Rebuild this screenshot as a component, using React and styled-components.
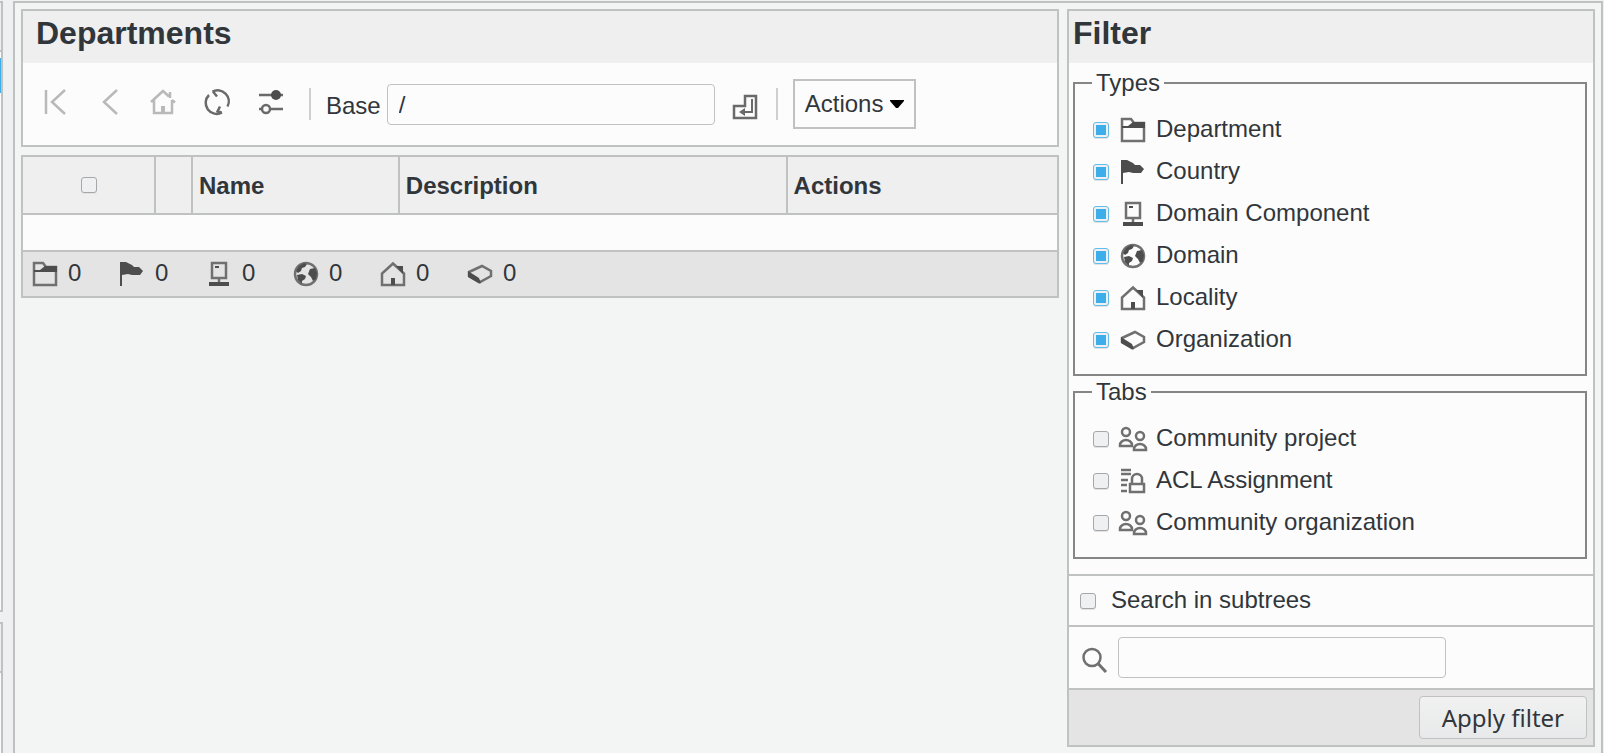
import React from "react";
import styled, { createGlobalStyle, css } from "styled-components";

const line = "#c0c1c1";
const surface = "#fcfcfc";
const ink = "#31363b";
const blue = "#3daee9";

const GlobalStyle = createGlobalStyle`
  *, *::before, *::after { box-sizing: border-box; }
  body {
    margin: 0;
    background: #eff0f1;
    color: ${ink};
    font: 24px/28px "Liberation Sans", Arial, sans-serif;
  }
  button, input { font: inherit; color: inherit; }
`;

const Page = styled.div`
  display: flex;
  gap: 10px;
  min-height: 100vh;
  padding: 1px 1px 0 0;
`;

const SideStrip = styled.aside`
  display: flex;
  flex-direction: column;
  gap: 10px;
  width: 3px;
  flex: none;
`;

const SidePanel = styled.div`
  border: 2px solid ${line};
  border-left: 0;
  background: ${surface};
  ${(p) => (p.$grow ? css`flex: 1; border-bottom: 0;` : css`height: 611px;`)}
`;

const SideHeading = styled.div`
  height: 49px;
  border-bottom: 2px solid ${line};
  background: #efefef;
`;

const SideActive = styled.div`
  height: 35px;
  margin-top: 6px;
  background: ${blue};
`;

const Frame = styled.main`
  flex: 1;
  min-width: 0;
  display: grid;
  grid-template-columns: minmax(0, 173fr) minmax(0, 88fr);
  gap: 8px;
  align-items: start;
  padding: 6px;
  border: 2px solid ${line};
  border-bottom: 0;
  background: #f3f5f4;
`;

const Column = styled.div`
  display: flex;
  flex-direction: column;
  gap: 8px;
`;

const Panel = styled.section`
  border: 2px solid ${line};
  background: ${surface};
`;

const PanelTitle = styled.h2`
  margin: 0;
  padding: 4px ${(p) => (p.$wide ? 13 : 4)}px 12px;
  background: #efefef;
  font-size: 32px;
  line-height: 36px;
`;

const Toolbar = styled.div`
  display: flex;
  align-items: center;
  min-height: 82px;
  padding-left: 20px;
`;

const IconGroup = styled.div`
  display: flex;
  gap: 30px;
  padding-bottom: 4px;
`;

const IconButton = styled.button`
  display: flex;
  padding: 0;
  border: 0;
  background: none;
  color: #6a6a6a;
  &:disabled { color: #b9b9b9; }
`;

const SubmitIcon = styled(IconButton)`
  margin-left: 18px;
  padding-top: 6px;
`;

const Separator = styled.span`
  width: 2px;
  height: 32px;
  margin: 0 ${(p) => p.$after}px 0 ${(p) => p.$before}px;
  background: #cfcfcf;
`;

const FieldLabel = styled.label`
  padding: 4px 6px 0 0;
`;

const TextInput = styled.input`
  width: 328px;
  height: 41px;
  padding: 2px 11px 0;
  border: 1px solid ${line};
  border-radius: 4px;
  background: ${surface};
  outline: 0;
`;

const MenuButton = styled.button`
  display: flex;
  align-items: center;
  gap: 7px;
  height: 50px;
  padding: 0 10px;
  border: 2px solid ${line};
  background: ${surface};
`;

const ListTable = styled.table`
  width: 100%;
  table-layout: fixed;
  border: 2px solid ${line};
  border-spacing: 0;
  background: ${surface};
`;

const HeadCell = styled.th`
  width: ${(p) => p.$width};
  height: 58px;
  padding: ${(p) => (p.$center ? 0 : 2)}px 6px 0;
  border-bottom: 2px solid ${line};
  border-right: ${(p) => (p.$last ? 0 : 2)}px solid ${line};
  background: #efefef;
  text-align: ${(p) => (p.$center ? "center" : "left")};
`;

const EmptyCell = styled.td`
  height: 35px;
  padding: 0;
`;

const SummaryCell = styled.td`
  height: 46px;
  padding: 0 10px;
  border-top: 2px solid ${line};
  background: #e4e4e4;
`;

const Summary = styled.div`
  display: flex;
`;

const Count = styled.span`
  display: flex;
  align-items: center;
  gap: 11px;
  width: 87px;
`;

const Caption = styled.span`
  padding-bottom: 2px;
`;

const Tick = styled.input.attrs({ type: "checkbox" })`
  appearance: none;
  display: block;
  flex: none;
  width: 16px;
  height: 16px;
  margin: ${(p) => (p.$center ? "0 auto" : "0")};
  border: 1px solid #a5a8ab;
  border-radius: 3px;
  background: #eff0f1;
  box-shadow: 0 1px 0 #e2e2e2;
  &:checked {
    border-color: #62bdec;
    background: linear-gradient(${blue}, ${blue}) center / 10px 10px no-repeat #eff0f1;
  }
`;

const Groups = styled.div`
  padding: 6px 6px 15px 4px;
`;

const Group = styled.fieldset`
  margin: 0;
  padding: 12px 18px 13px 17px;
  border: 2px solid #868686;
  & + & { margin-top: 2px; }
`;

const GroupName = styled.legend`
  padding: 0 4px;
`;

const Option = styled.label`
  display: flex;
  align-items: center;
  height: 42px;
  padding-left: 1px;
`;

const OptionIcon = styled.span`
  display: flex;
  margin: 0 11px 0 12px;
`;

const SubtreeRow = styled.label`
  display: flex;
  align-items: center;
  gap: 15px;
  height: 51px;
  padding-left: 11px;
  border-top: 2px solid ${line};
`;

const SearchRow = styled.div`
  display: flex;
  align-items: center;
  gap: 12px;
  height: 63px;
  padding-left: 13px;
  border-top: 2px solid ${line};
`;

const SearchLabel = styled.label`
  display: flex;
  padding-top: 4px;
`;

const PanelFooter = styled.div`
  display: flex;
  justify-content: flex-end;
  padding: 6px;
  border-top: 2px solid ${line};
  background: #e4e4e4;
`;

const ApplyButton = styled.button`
  height: 43px;
  padding: 0 22px;
  border: 1px solid ${line};
  border-radius: 4px;
  background: linear-gradient(#f1f1f1, #e8e9ea);
  font-family: "Noto Sans", sans-serif;
`;

const Drawing = styled.svg`
  display: block;
  width: 24px;
  height: 24px;
  overflow: visible;
  fill: none;
  stroke-width: 2.5;
  color: ${(p) => (p.$inherit ? "inherit" : "#707070")};
  stroke: currentColor;
  .solid { fill: #4d4d4d; stroke: none; }
  .tone { fill: currentColor; stroke: none; }
`;

const shapes = {
  first: <path d="M3 0v24M22 0L9 12L22 24" />,
  back: <path d="M20 0L7 12L20 24" />,
  root: (
    <>
      <path d="M0 12L12 1L18 6.500M3 10v13h18V10M21 10l3 2.500" />
      <path d="M19 2v6" />
      <path className="tone" d="M10 16h4v7h-4z" />
    </>
  ),
  refresh: (
    <>
      <path d="M4 5A11 11 0 0 0 17 22.500M7.500 1.700A11 11 0 0 1 22.500 16.500" />
      <path d="M8 1.500L12 6.500M16.500 22.500L12.500 21.500L15 16.500" />
    </>
  ),
  sliders: (
    <>
      <path d="M0 5h24M0 19h3M11 19h13" />
      <circle className="solid" cx="17" cy="5" r="5" />
      <circle cx="7" cy="19" r="4" />
    </>
  ),
  enter: (
    <>
      <path d="M12 1h11v22H1V11h11z" />
      <path d="M19 4v13h-9" strokeWidth="2" />
      <path className="tone" d="M6 17l6-4v8z" />
    </>
  ),
  folder: (
    <>
      <path d="M1 1h9l3 4h10v18H1z" />
      <path className="solid" d="M1 8h6l5-4h12v6H1z" />
    </>
  ),
  flag: <path className="solid" d="M0 0h6l6 3l2 2h5l4 4l-3 4h-8l-4-1l-6 1v11H0z" />,
  computer: (
    <>
      <path d="M5 1h14v15H5zM12 17v4" />
      <path className="solid" d="M8 4h4v2H8zM2 20h20v4H2z" />
    </>
  ),
  globe: (
    <>
      <circle cx="12" cy="12" r="11" />
      <path
        className="solid"
        d="M2 9l3-5l5-3l3 1l-2 3l-3 1l-1 3l-3 2zM3 13l5-1l4 2l-1 3l-3 2v3l-4-4zM16 7l5-1l2 5l-1 6l-3 2l-2-4l-3-3z"
      />
    </>
  ),
  house: (
    <>
      <path d="M12 1.500L1 11.500V23h22V11.500z" />
      <path className="solid" d="M15 4h7v8zM10 16h4v7h-4z" />
    </>
  ),
  block: (
    <>
      <path d="M1 10l13-6l9 5v5l-11 6l-11-6z" />
      <path className="solid" d="M0 9l11 7l2 5l-2 .5L0 15z" />
    </>
  ),
  people: (
    <>
      <circle cx="5" cy="5" r="4" />
      <path d="M-1 19v-1a6 5 0 0 1 12 0v1z" />
      <circle cx="19" cy="9" r="4" />
      <path d="M13 23v-1a6 5 0 0 1 12 0v1z" />
    </>
  ),
  lock: (
    <>
      <path d="M0 1h10M0 5h10M0 11h7M0 16h6M0 22h6" />
      <path d="M9 15h14v8H9zM11 15v-5a5 5 0 0 1 10 0v5" />
    </>
  ),
  search: (
    <>
      <circle cx="10" cy="9.500" r="8.500" />
      <path d="M16 15.500L24 24" strokeWidth="3" />
    </>
  ),
};

function Icon({ name, inherit }) {
  return (
    <Drawing viewBox="0 0 24 24" $inherit={inherit} aria-hidden="true">
      {shapes[name]}
    </Drawing>
  );
}

const types = [
  ["Department", "folder"],
  ["Country", "flag"],
  ["Domain Component", "computer"],
  ["Domain", "globe"],
  ["Locality", "house"],
  ["Organization", "block"],
];

const tabs = [
  ["Community project", "people"],
  ["ACL Assignment", "lock"],
  ["Community organization", "people"],
];

const navigation = [
  ["first", "Root", true],
  ["back", "Up", true],
  ["root", "Home", true],
  ["refresh", "Reload", false],
  ["sliders", "Toggle filter", false],
];

function FilterGroup({ name, options, checked }) {
  return (
    <Group>
      <GroupName>{name}</GroupName>
      {options.map(([label, icon]) => (
        <Option key={label}>
          <Tick defaultChecked={checked} />
          <OptionIcon>
            <Icon name={icon} />
          </OptionIcon>
          <Caption>{label}</Caption>
        </Option>
      ))}
    </Group>
  );
}

export default function App() {
  return (
    <>
      <GlobalStyle />
      <Page>
        <SideStrip>
          <SidePanel>
            <SideHeading />
            <SideActive />
          </SidePanel>
          <SidePanel $grow>
            <SideHeading />
          </SidePanel>
        </SideStrip>
        <Frame>
          <Column>
            <Panel>
              <PanelTitle $wide>Departments</PanelTitle>
              <Toolbar>
                <IconGroup>
                  {navigation.map(([icon, label, disabled]) => (
                    <IconButton key={icon} aria-label={label} disabled={disabled}>
                      <Icon name={icon} inherit />
                    </IconButton>
                  ))}
                </IconGroup>
                <Separator $before={26} $after={15} />
                <FieldLabel htmlFor="base">Base</FieldLabel>
                <TextInput id="base" type="text" defaultValue="/" />
                <SubmitIcon aria-label="Submit">
                  <Icon name="enter" inherit />
                </SubmitIcon>
                <Separator $before={19} $after={15} />
                <MenuButton aria-haspopup="menu">
                  Actions
                  <svg width="14" height="8" viewBox="0 0 14 8" aria-hidden="true">
                    <path d="M0 0h14v1L8 8H6L0 1z" fill="#000" />
                  </svg>
                </MenuButton>
              </Toolbar>
            </Panel>
            <ListTable>
              <thead>
                <tr>
                  <HeadCell $width="133px" $center>
                    <Tick $center aria-label="Select all" />
                  </HeadCell>
                  <HeadCell $width="37px" />
                  <HeadCell $width="20%">Name</HeadCell>
                  <HeadCell $width="37.5%">Description</HeadCell>
                  <HeadCell $last>Actions</HeadCell>
                </tr>
              </thead>
              <tbody>
                <tr>
                  <EmptyCell colSpan={5} />
                </tr>
              </tbody>
              <tfoot>
                <tr>
                  <SummaryCell colSpan={5}>
                    <Summary>
                      {types.map(([label, icon]) => (
                        <Count key={label} title={label}>
                          <Icon name={icon} />
                          <Caption>0</Caption>
                        </Count>
                      ))}
                    </Summary>
                  </SummaryCell>
                </tr>
              </tfoot>
            </ListTable>
          </Column>
          <Panel>
            <PanelTitle>Filter</PanelTitle>
            <Groups>
              <FilterGroup name="Types" options={types} checked />
              <FilterGroup name="Tabs" options={tabs} />
            </Groups>
            <SubtreeRow>
              <Tick />
              <Caption>Search in subtrees</Caption>
            </SubtreeRow>
            <SearchRow>
              <SearchLabel htmlFor="search" aria-label="Search">
                <Icon name="search" />
              </SearchLabel>
              <TextInput id="search" type="text" />
            </SearchRow>
            <PanelFooter>
              <ApplyButton>Apply filter</ApplyButton>
            </PanelFooter>
          </Panel>
        </Frame>
      </Page>
    </>
  );
}
